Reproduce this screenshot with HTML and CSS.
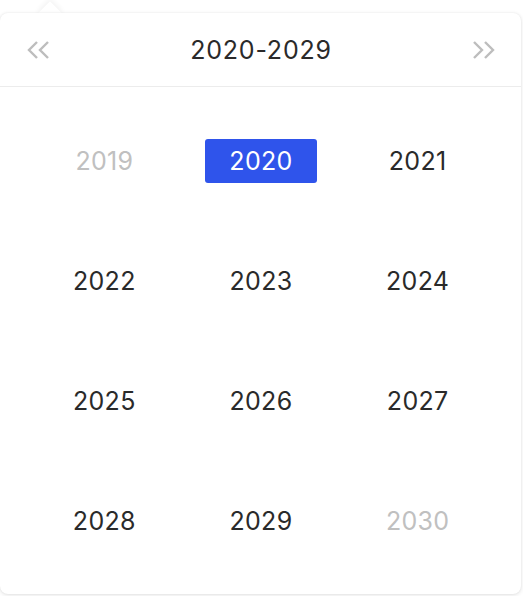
FILE: index.html
```html
<!DOCTYPE html>
<html lang="en">
<head>
<meta charset="utf-8">
<title>Year picker</title>
<link rel="stylesheet" href="styles.css">
</head>
<body>
<div class="picker">
  <div class="arrow"></div>
  <div class="panel">
    <div class="header">
      <button class="nav" aria-label="Previous decade">
        <svg width="24" height="18" viewBox="0 0 24 18"><path d="M11 1 L3 9 L11 17 M22 1 L14 9 L22 17" fill="none" stroke="#bdbdbd" stroke-width="2.4"/></svg>
      </button>
      <div class="title">2020-2029</div>
      <button class="nav" aria-label="Next decade">
        <svg width="24" height="18" viewBox="0 0 24 18"><path d="M2 1 L10 9 L2 17 M13 1 L21 9 L13 17" fill="none" stroke="#bdbdbd" stroke-width="2.4"/></svg>
      </button>
    </div>
    <div class="grid">
      <div class="cell"><span class="year muted">2019</span></div>
      <div class="cell"><span class="year selected">2020</span></div>
      <div class="cell"><span class="year">2021</span></div>
      <div class="cell"><span class="year">2022</span></div>
      <div class="cell"><span class="year">2023</span></div>
      <div class="cell"><span class="year">2024</span></div>
      <div class="cell"><span class="year">2025</span></div>
      <div class="cell"><span class="year">2026</span></div>
      <div class="cell"><span class="year">2027</span></div>
      <div class="cell"><span class="year">2028</span></div>
      <div class="cell"><span class="year">2029</span></div>
      <div class="cell"><span class="year muted">2030</span></div>
    </div>
  </div>
</div>
</body>
</html>
```
FILE: styles.css
```css
* { box-sizing: border-box; }
html, body { margin: 0; padding: 0; background: #ffffff; }
body {
  font-family: Inter, "Noto Sans", sans-serif;
  width: 523px;
  height: 596px;
  overflow: hidden;
}
.picker {
  position: relative;
  padding-top: 13px;
  width: 521px;
}
.arrow {
  position: absolute;
  left: 41px;
  top: 5px;
  width: 18px;
  height: 18px;
  background: #fff;
  transform: rotate(45deg);
  box-shadow: -2px -2px 5px rgba(0,0,0,0.05);
  z-index: 0;
}
.panel {
  position: relative;
  z-index: 1;
  width: 521px;
  height: 581px;
  background: #fff;
  border-radius: 8px;
  box-shadow: 0 1px 4px rgba(0,0,0,0.12), 0 0 2px rgba(0,0,0,0.06);
  display: flex;
  flex-direction: column;
}
.header {
  height: 74px;
  display: flex;
  align-items: center;
  justify-content: space-between;
  padding: 0 25px 0 26px;
  border-bottom: 1px solid #ececec;
}
.nav {
  border: 0;
  background: none;
  padding: 0;
  width: 24px;
  height: 18px;
  display: flex;
  cursor: pointer;
}
.title {
  font-size: 25px;
  color: #2a2a2a;
  letter-spacing: 0.8px;
}
.grid {
  flex: 1;
  display: grid;
  grid-template-columns: repeat(3, 1fr);
  grid-template-rows: repeat(4, 120px);
  padding: 14px 25px 12px 26px;
}
.cell {
  display: flex;
  align-items: center;
  justify-content: center;
}
.year {
  display: flex;
  align-items: center;
  justify-content: center;
  width: 112px;
  height: 44px;
  border-radius: 3px;
  font-size: 25px;
  color: #2a2a2a;
  letter-spacing: 0.3px;
}
.year.muted { color: #c0c0c0; }
.year.selected { background: #2f54eb; color: #fff; }
```
